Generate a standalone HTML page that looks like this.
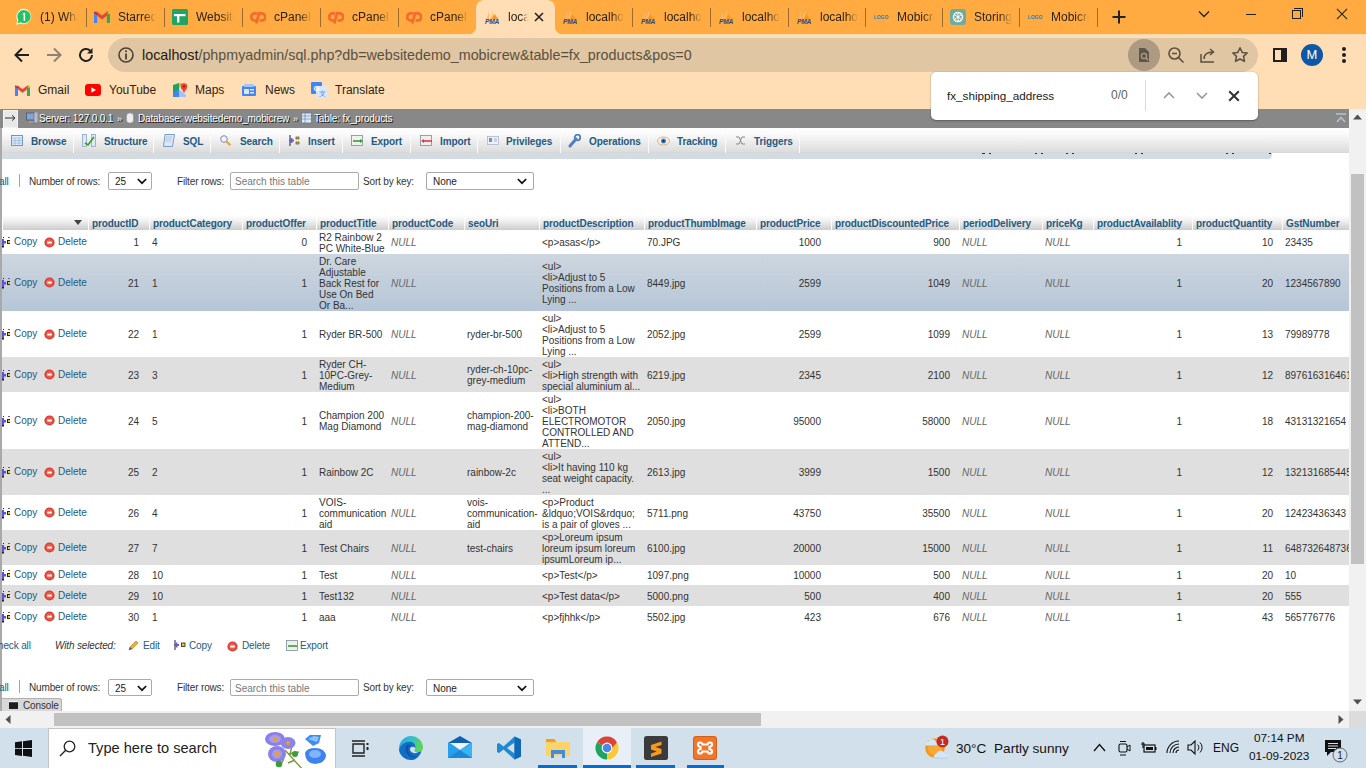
<!DOCTYPE html>
<html><head><meta charset="utf-8">
<style>
*{box-sizing:border-box;margin:0;padding:0}
html,body{width:1366px;height:768px;overflow:hidden;background:#fff;font-family:"Liberation Sans",sans-serif;position:relative}
.a{position:absolute}
#tabstrip{position:absolute;left:0;top:0;width:1366px;height:34px;background:#ffab42}
.tab{position:absolute;top:0;height:33px;width:78px}
.tab .ic{position:absolute;left:8px;top:9px;width:16px;height:16px}
.tab .tt{position:absolute;left:32px;top:10px;font-size:12px;color:#2a2218;white-space:nowrap;overflow:hidden;width:38px;line-height:15px;-webkit-mask-image:linear-gradient(to right,#000 68%,transparent 100%)}
.sep{position:absolute;top:8px;width:1px;height:19px;background:#9b6a2c}
#toolbar{position:absolute;left:0;top:34px;width:1366px;height:75px;background:#ffdeb5}
#omni{position:absolute;left:108px;top:38px;width:1150px;height:34px;border-radius:17px;background:#e0c6a2}
.bm{position:absolute;top:83px;font-size:12px;color:#2d2416;line-height:15px;white-space:nowrap}
.pbc{position:absolute;top:113px;letter-spacing:-0.15px;font-size:10px;line-height:12px;color:#fff;white-space:nowrap;text-shadow:1px 1px 0 #111}
.ptb{position:absolute;top:128px;width:1px;height:25px;background:#d2d2d2;border-right:1px solid #fafafa}
.ptt{position:absolute;top:136px;letter-spacing:-0.1px;font-size:10px;line-height:12px;font-weight:bold;color:#235a81;white-space:nowrap}
.ftx{position:absolute;font-size:10px;line-height:12px;color:#333;white-space:nowrap;letter-spacing:-0.15px}
.sel{position:absolute;background:#fff;border:1px solid #aaa;border-radius:2px}
.sel span{position:absolute;top:3px;font-size:10px;line-height:11px;color:#222;white-space:nowrap}
.chev{position:absolute}
#tbl{border-collapse:collapse;table-layout:fixed;width:1378px;position:absolute;left:2px;top:0}
#tbl th{height:15px;padding:0 0 0 3px;text-align:left;font-size:10px;font-weight:bold;color:#235a81;white-space:nowrap;overflow:hidden;background:linear-gradient(#ffffff 0%,#f0f0f0 40%,#cccccc 100%);box-shadow:inset 1px 0 0 #fff;position:relative;line-height:15px;padding-top:0;padding-left:4px}
#tbl th span{position:relative;top:1px;letter-spacing:-0.1px}
#tbl td{padding:1px 3px 0 3px;font-size:10px;line-height:11px;color:#333;white-space:nowrap;overflow:hidden;vertical-align:middle}
#tbl td.r{text-align:right;padding-right:9px}
#tbl td.n{font-style:italic;color:#666}
#tbl tr.g td{background:#dfdfdf}
#tbl tr.h td{background:linear-gradient(#ced6df,#b6c6d7)}
#tbl td.act{padding:0;position:relative}
.ac{position:relative;height:12px}
.cpi{position:absolute;left:0;top:0}
.cp{position:absolute;left:12px;top:0;color:#235a81;line-height:12px}
.dli{position:absolute;left:42px;top:0}
.dl{position:absolute;left:56px;top:0;color:#235a81;line-height:12px}
.tb{position:absolute;top:740px;font-size:13.6px;line-height:17px;color:#111;white-space:nowrap}
</style></head><body>
<div id="tabstrip" class="a"></div>
<!-- active tab -->
<div class="a" style="left:476px;top:0;width:79px;height:34px;background:#ffdeb5;border-radius:8px 8px 0 0"></div>
<div class="a" style="left:468px;top:26px;width:8px;height:8px;background:radial-gradient(circle at 0 0,#ffab42 8px,#ffdeb5 8.5px)"></div>
<div class="a" style="left:555px;top:26px;width:8px;height:8px;background:radial-gradient(circle at 100% 0,#ffab42 8px,#ffdeb5 8.5px)"></div>
<!-- tabs -->
<div class="tab" style="left:8px"><svg class="ic" viewBox="0 0 16 16" style="left:7px;top:8px;width:17px;height:17px"><path d="M8.5 0.8a7.2 7.2 0 0 0-6.2 10.9L1 15.8l4.2-1.2A7.2 7.2 0 1 0 8.5 0.8z" fill="#fff"/><path d="M8.5 1.8a6.2 6.2 0 0 0-5.3 9.5L2.4 14.3l3.1-.9A6.2 6.2 0 1 0 8.5 1.8z" fill="#25c366"/><path d="M7.3 5.2l2.2-1v7.8H8.1V5.9l-.8.4z" fill="#fff"/></svg><div class="tt">(1) WhatsApp</div></div>
<div class="sep" style="left:86px"></div>
<div class="tab" style="left:86px"><svg class="ic" viewBox="0 0 16 16"><path d="M1.5 3.5L8 8.5l6.5-5" stroke="#ea4335" stroke-width="3" fill="none" stroke-linejoin="miter"/><path d="M0 3v11h3.2V4.5z" fill="#4285f4"/><path d="M12.8 4.5V14H16V3z" fill="#34a853"/><path d="M12.8 4.5L16 2.3V5z" fill="#fbbc04"/><path d="M0 2.3L3.2 4.5V6L0 4z" fill="#c5221f"/></svg><div class="tt">Starred</div></div>
<div class="sep" style="left:164px"></div>
<div class="tab" style="left:164px"><svg class="ic" viewBox="0 0 16 16"><rect x="0" y="0" width="16" height="16" rx="1.5" fill="#1fa463"/><rect x="2" y="5" width="11.5" height="2.2" fill="#fff"/><rect x="5" y="5" width="2.4" height="8.5" fill="#fff"/></svg><div class="tt">Website</div></div>
<div class="sep" style="left:242px"></div>
<div class="tab" style="left:242px"><svg class="ic" viewBox="0 0 16 16"><path d="M7 4.3H4.8A3.6 3.6 0 0 0 4.8 11.5H6.5" stroke="#f46b2c" stroke-width="2.7" fill="none"/><path d="M6.3 14.5L9 4.3h2.6A3.6 3.6 0 0 1 11.6 11.5H9.6" stroke="#f46b2c" stroke-width="2.7" fill="none"/></svg><div class="tt">cPanel</div></div>
<div class="sep" style="left:320px"></div>
<div class="tab" style="left:320px"><svg class="ic" viewBox="0 0 16 16"><path d="M7 4.3H4.8A3.6 3.6 0 0 0 4.8 11.5H6.5" stroke="#f46b2c" stroke-width="2.7" fill="none"/><path d="M6.3 14.5L9 4.3h2.6A3.6 3.6 0 0 1 11.6 11.5H9.6" stroke="#f46b2c" stroke-width="2.7" fill="none"/></svg><div class="tt">cPanel</div></div>
<div class="sep" style="left:398px"></div>
<div class="tab" style="left:398px"><svg class="ic" viewBox="0 0 16 16"><path d="M7 4.3H4.8A3.6 3.6 0 0 0 4.8 11.5H6.5" stroke="#f46b2c" stroke-width="2.7" fill="none"/><path d="M6.3 14.5L9 4.3h2.6A3.6 3.6 0 0 1 11.6 11.5H9.6" stroke="#f46b2c" stroke-width="2.7" fill="none"/></svg><div class="tt">cPanel</div></div>
<div class="tab" style="left:476px"><svg class="ic" viewBox="0 0 16 16"><path d="M2.5 10.5 L5 2.5 L5 10.5z" fill="#fbb868"/><path d="M6 10.5 L9 1.5 L8.5 10.5z" fill="#fcc27a"/><path d="M7 10.5 L10.5 5 L14.5 10.5z" fill="#f59a20"/><text x="8" y="14.8" font-size="6.6" font-weight="bold" font-style="italic" fill="#34418f" text-anchor="middle" font-family="Liberation Sans" letter-spacing="-0.2">PMA</text></svg><div class="tt" style="width:20px">localhost</div>
<svg class="a" style="left:57px;top:11px" width="12" height="12" viewBox="0 0 12 12"><path d="M2 2L10 10M10 2L2 10" stroke="#222" stroke-width="1.6"/></svg></div>
<div class="tab" style="left:554px"><svg class="ic" viewBox="0 0 16 16"><path d="M2.5 10.5 L5 2.5 L5 10.5z" fill="#fbb868"/><path d="M6 10.5 L9 1.5 L8.5 10.5z" fill="#fcc27a"/><path d="M7 10.5 L10.5 5 L14.5 10.5z" fill="#f59a20"/><text x="8" y="14.8" font-size="6.6" font-weight="bold" font-style="italic" fill="#34418f" text-anchor="middle" font-family="Liberation Sans" letter-spacing="-0.2">PMA</text></svg><div class="tt">localhost</div></div>
<div class="sep" style="left:632px"></div>
<div class="tab" style="left:632px"><svg class="ic" viewBox="0 0 16 16"><path d="M2.5 10.5 L5 2.5 L5 10.5z" fill="#fbb868"/><path d="M6 10.5 L9 1.5 L8.5 10.5z" fill="#fcc27a"/><path d="M7 10.5 L10.5 5 L14.5 10.5z" fill="#f59a20"/><text x="8" y="14.8" font-size="6.6" font-weight="bold" font-style="italic" fill="#34418f" text-anchor="middle" font-family="Liberation Sans" letter-spacing="-0.2">PMA</text></svg><div class="tt">localhost</div></div>
<div class="sep" style="left:710px"></div>
<div class="tab" style="left:710px"><svg class="ic" viewBox="0 0 16 16"><path d="M2.5 10.5 L5 2.5 L5 10.5z" fill="#fbb868"/><path d="M6 10.5 L9 1.5 L8.5 10.5z" fill="#fcc27a"/><path d="M7 10.5 L10.5 5 L14.5 10.5z" fill="#f59a20"/><text x="8" y="14.8" font-size="6.6" font-weight="bold" font-style="italic" fill="#34418f" text-anchor="middle" font-family="Liberation Sans" letter-spacing="-0.2">PMA</text></svg><div class="tt">localhost</div></div>
<div class="sep" style="left:788px"></div>
<div class="tab" style="left:788px"><svg class="ic" viewBox="0 0 16 16"><path d="M2.5 10.5 L5 2.5 L5 10.5z" fill="#fbb868"/><path d="M6 10.5 L9 1.5 L8.5 10.5z" fill="#fcc27a"/><path d="M7 10.5 L10.5 5 L14.5 10.5z" fill="#f59a20"/><text x="8" y="14.8" font-size="6.6" font-weight="bold" font-style="italic" fill="#34418f" text-anchor="middle" font-family="Liberation Sans" letter-spacing="-0.2">PMA</text></svg><div class="tt">localhost</div></div>
<div class="sep" style="left:865px"></div>
<div class="tab" style="left:865px"><svg class="ic" viewBox="0 0 16 16"><text x="8" y="10" font-size="5" font-weight="bold" fill="#2a7fc1" text-anchor="middle" font-family="Liberation Sans">LOGO</text></svg><div class="tt">Mobicrew</div></div>
<div class="sep" style="left:942px"></div>
<div class="tab" style="left:942px"><svg class="ic" viewBox="0 0 16 16"><rect width="16" height="16" rx="3" fill="#74aa9c"/><circle cx="8" cy="8" r="4.5" fill="none" stroke="#fff" stroke-width="1.4"/><path d="M5 6l6 4M5 10l6-4M8 3.5v9" stroke="#fff" stroke-width="1"/></svg><div class="tt">Storing</div></div>
<div class="sep" style="left:1019px"></div>
<div class="tab" style="left:1019px"><svg class="ic" viewBox="0 0 16 16"><text x="8" y="10" font-size="5" font-weight="bold" fill="#2a7fc1" text-anchor="middle" font-family="Liberation Sans">LOGO</text></svg><div class="tt">Mobicrew</div></div>
<div class="sep" style="left:1097px"></div>
<svg class="a" style="left:1111px;top:9px" width="16" height="16" viewBox="0 0 16 16"><path d="M8 1.5v13M1.5 8h13" stroke="#222" stroke-width="2"/></svg>
<svg class="a" style="left:1198px;top:9px" width="12" height="10" viewBox="0 0 12 10"><path d="M1 2.5l5 5 5-5" stroke="#222" stroke-width="1.3" fill="none"/></svg>
<div class="a" style="left:1246px;top:14px;width:10px;height:1px;background:#222"></div>
<div class="a" style="left:1292px;top:10px;width:9px;height:9px;border:1px solid #222"></div>
<div class="a" style="left:1294px;top:8px;width:9px;height:9px;border-top:1px solid #222;border-right:1px solid #222"></div>
<svg class="a" style="left:1336px;top:8px" width="12" height="12" viewBox="0 0 13 13"><path d="M1 1L12 12M12 1L1 12" stroke="#222" stroke-width="1.2"/></svg>

<div id="toolbar" class="a"></div>
<svg class="a" style="left:13px;top:46px" width="18" height="18" viewBox="0 0 18 18"><path d="M16 9H3M9 2.5L2.5 9 9 15.5" stroke="#1f1f1f" stroke-width="2" fill="none"/></svg>
<svg class="a" style="left:45px;top:46px" width="18" height="18" viewBox="0 0 18 18"><path d="M2 9h13M9 2.5L15.5 9 9 15.5" stroke="#8e8270" stroke-width="2" fill="none"/></svg>
<svg class="a" style="left:77px;top:46px" width="18" height="18" viewBox="0 0 18 18"><path d="M15 9a6 6 0 1 1-1.8-4.3" stroke="#1f1f1f" stroke-width="2" fill="none"/><path d="M15.5 2v5.5H10z" fill="#1f1f1f"/></svg>
<div id="omni" class="a"></div>
<svg class="a" style="left:117px;top:46px" width="18" height="18" viewBox="0 0 18 18"><circle cx="9" cy="9" r="7" stroke="#4b4336" stroke-width="1.6" fill="none"/><rect x="8.1" y="7.5" width="1.8" height="6" fill="#4b4336"/><rect x="8.1" y="4.3" width="1.8" height="1.8" fill="#4b4336"/></svg>
<div class="a" style="left:142px;top:46px;font-size:14.3px;line-height:18px;color:#5a5040;white-space:nowrap"><span style="color:#1f1a12">localhost</span>/phpmyadmin/sql.php?db=websitedemo_mobicrew&amp;table=fx_products&amp;pos=0</div>
<div class="a" style="left:1128px;top:39px;width:32px;height:32px;border-radius:16px;background:#ad9a80"></div>
<svg class="a" style="left:1136px;top:47px" width="16" height="16" viewBox="0 0 16 16"><path d="M3 1h6l4 4v10H3z" fill="#5f574b"/><circle cx="8" cy="9" r="2.6" stroke="#ad9a80" stroke-width="1.3" fill="none"/><path d="M9.8 10.8l2.4 2.4" stroke="#ad9a80" stroke-width="1.4"/></svg>
<svg class="a" style="left:1167px;top:46px" width="18" height="18" viewBox="0 0 18 18"><circle cx="7.5" cy="7.5" r="5.5" stroke="#5a5040" stroke-width="1.6" fill="none"/><path d="M5 7.5h5M11.5 11.5l5 5" stroke="#5a5040" stroke-width="1.6"/></svg>
<svg class="a" style="left:1199px;top:46px" width="18" height="18" viewBox="0 0 18 18"><path d="M2 8v8h13" stroke="#5a5040" stroke-width="1.5" fill="none"/><path d="M5 13c0-5 4-7 9-7M11 3l3.5 3L11 9" stroke="#5a5040" stroke-width="1.5" fill="none"/></svg>
<svg class="a" style="left:1231px;top:46px" width="18" height="18" viewBox="0 0 18 18"><path d="M9 1.8l2.2 4.6 5 .6-3.7 3.4 1 5L9 13l-4.5 2.4 1-5L1.8 7l5-.6z" stroke="#5a5040" stroke-width="1.5" fill="none" stroke-linejoin="round"/></svg>
<div class="a" style="left:1273px;top:48px;width:14px;height:14px;border:2px solid #1f1f1f;border-right-width:6px"></div>
<div class="a" style="left:1301px;top:44px;width:22px;height:22px;border-radius:11px;background:#0b57a8;color:#fff;font-size:13px;line-height:22px;text-align:center">M</div>
<div class="a" style="left:1342px;top:47px;width:4px;height:4px;border-radius:2px;background:#1f1f1f"></div>
<div class="a" style="left:1342px;top:53px;width:4px;height:4px;border-radius:2px;background:#1f1f1f"></div>
<div class="a" style="left:1342px;top:59px;width:4px;height:4px;border-radius:2px;background:#1f1f1f"></div>
<!-- bookmarks -->
<svg class="a" style="left:15px;top:83px" width="15" height="14" viewBox="0 0 16 15"><path d="M1.5 3.5L8 8.5l6.5-5" stroke="#ea4335" stroke-width="3" fill="none"/><path d="M0 3v11h3.2V4.5z" fill="#4285f4"/><path d="M12.8 4.5V14H16V3z" fill="#34a853"/><path d="M12.8 4.5L16 2.3V5z" fill="#fbbc04"/><path d="M0 2.3L3.2 4.5V6L0 4z" fill="#c5221f"/></svg>
<div class="bm" style="left:38px">Gmail</div>
<svg class="a" style="left:85px;top:84px" width="16" height="12" viewBox="0 0 16 12"><rect width="16" height="12" rx="3" fill="#f00"/><path d="M6.3 3.3v5.4L11 6z" fill="#fff"/></svg>
<div class="bm" style="left:109px">YouTube</div>
<svg class="a" style="left:172px;top:82px" width="16" height="16" viewBox="0 0 16 16"><path d="M1 3l6-2 0 14-6 0z" fill="#1ea362"/><path d="M1 11l6-4 0 8H1z" fill="#4285f4"/><path d="M7 7l7 6v2H7z" fill="#a0c3ff"/><path d="M7 1l4 0-4 6z" fill="#fbbc04"/><circle cx="12" cy="4.5" r="3.2" fill="#e94235"/><path d="M9.5 6l2.5 5 2.5-5z" fill="#e94235"/><circle cx="12" cy="4.5" r="1.1" fill="#8b1d16"/></svg>
<div class="bm" style="left:195px">Maps</div>
<svg class="a" style="left:241px;top:83px" width="16" height="14" viewBox="0 0 16 14"><rect x="1" y="3" width="14" height="10" rx="1" fill="#4285f4"/><rect x="3" y="1" width="10" height="3" rx="1" fill="#a3c5fa"/><rect x="3" y="6" width="5" height="5" fill="#fff" opacity=".8"/><rect x="9" y="6" width="4" height="1.5" fill="#fff" opacity=".8"/><rect x="9" y="9" width="4" height="1.5" fill="#fff" opacity=".8"/></svg>
<div class="bm" style="left:265px">News</div>
<svg class="a" style="left:311px;top:82px" width="16" height="16" viewBox="0 0 16 16"><rect x="0" y="0" width="11" height="12" rx="1" fill="#4285f4"/><rect x="5" y="4" width="11" height="12" rx="1" fill="#dbe6f8"/><text x="5.5" y="9" font-size="8" font-weight="bold" fill="#fff" text-anchor="middle" font-family="Liberation Sans">G</text><text x="11" y="14" font-size="7" fill="#4285f4" text-anchor="middle" font-family="Liberation Sans">文</text></svg>
<div class="bm" style="left:335px">Translate</div>
<!-- PMA frame -->
<div class="a" style="left:0;top:109px;width:1350px;height:602px;background:#fff"></div>
<div class="a" style="left:0;top:109px;width:2px;height:602px;background:#a9a9a9"></div>
<div class="a" style="left:0;top:109px;width:1350px;height:19px;background:#888"></div>
<div class="a" style="left:3px;top:110px;width:15px;height:18px;background:#e8e8e8;border:1px solid #f4f4f4"></div>
<svg class="a" style="left:5px;top:114px" width="11" height="8" viewBox="0 0 11 8"><path d="M0 4h9.5M7 1.3l3 2.7-3 2.7" stroke="#333" stroke-width="1" fill="none"/></svg>
<svg class="a" style="left:26px;top:112px" width="12" height="12" viewBox="0 0 12 12"><rect x="0.5" y="1" width="9" height="7" fill="#7fa6d9" stroke="#556" stroke-width="0.8"/><rect x="3" y="9" width="5" height="2" fill="#99a"/><rect x="8" y="0" width="4" height="11" fill="#bbc" stroke="#667" stroke-width="0.6"/></svg>
<div class="pbc" style="left:39px">Server: 127.0.0.1</div>
<div class="pbc" style="left:117px;font-size:9px">»</div>
<svg class="a" style="left:126px;top:112px" width="8" height="12" viewBox="0 0 8 12"><rect x="0.5" y="1" width="7" height="10" rx="3" fill="#eee" stroke="#999" stroke-width="0.8"/></svg>
<div class="pbc" style="left:138px">Database: websitedemo_mobicrew</div>
<div class="pbc" style="left:293px;font-size:9px">»</div>
<svg class="a" style="left:301px;top:112px" width="11" height="12" viewBox="0 0 11 12"><rect x="0.5" y="1" width="10" height="10" fill="#dfe8f0" stroke="#5a7ea8" stroke-width="0.8"/><path d="M0.5 4h10M0.5 7h10M4 1v10" stroke="#5a7ea8" stroke-width="0.6"/></svg>
<div class="pbc" style="left:314px">Table: fx_products</div>
<svg class="a" style="left:1336px;top:113px" width="10" height="10" viewBox="0 0 10 10"><path d="M0 1h10" stroke="#b7c2ce" stroke-width="1.5"/><path d="M1 9l4-4.5L9 9" stroke="#b7c2ce" stroke-width="1.5" fill="none"/></svg>
<!-- tabs -->
<div class="a" style="left:2px;top:128px;width:1347px;height:25px;background:linear-gradient(#ffffff 0%,#fafafa 25%,#e4e4e4 80%,#dcdcdc 100%);border-bottom:1px solid #d8d8d8"></div>
<div class="a" style="left:2px;top:153px;width:1270px;height:6px;background:#d3dce3;border-radius:0 0 4px 0"></div>
<div class="a" style="left:982px;top:153px;width:3px;height:1px;background:#333"></div><div class="a" style="left:989px;top:153px;width:2px;height:1px;background:#333"></div><div class="a" style="left:1035px;top:153px;width:2px;height:1px;background:#333"></div><div class="a" style="left:1041px;top:153px;width:2px;height:1px;background:#333"></div><div class="a" style="left:1066px;top:153px;width:2px;height:1px;background:#333"></div><div class="a" style="left:1072px;top:153px;width:2px;height:1px;background:#333"></div><div class="a" style="left:1135px;top:153px;width:2px;height:1px;background:#333"></div><div class="a" style="left:1141px;top:153px;width:2px;height:1px;background:#333"></div><div class="a" style="left:1226px;top:153px;width:2px;height:1px;background:#333"></div><div class="a" style="left:1232px;top:153px;width:2px;height:1px;background:#333"></div><div class="a" style="left:1269px;top:153px;width:2px;height:1px;background:#333"></div>
<div id="ptabs">
<div class="ptb" style="left:73px"></div><div class="ptb" style="left:153px"></div><div class="ptb" style="left:210px"></div><div class="ptb" style="left:279px"></div><div class="ptb" style="left:342px"></div><div class="ptb" style="left:410px"></div><div class="ptb" style="left:477px"></div><div class="ptb" style="left:560px"></div><div class="ptb" style="left:648px"></div><div class="ptb" style="left:725px"></div><div class="ptb" style="left:799px"></div>
<div class="ptt" style="left:31px">Browse</div>
<div class="ptt" style="left:104px">Structure</div>
<div class="ptt" style="left:183px">SQL</div>
<div class="ptt" style="left:240px">Search</div>
<div class="ptt" style="left:308px">Insert</div>
<div class="ptt" style="left:371px">Export</div>
<div class="ptt" style="left:440px">Import</div>
<div class="ptt" style="left:506px">Privileges</div>
<div class="ptt" style="left:589px">Operations</div>
<div class="ptt" style="left:677px">Tracking</div>
<div class="ptt" style="left:754px">Triggers</div>
<!-- tab icons -->
<svg class="a" style="left:11px;top:135px" width="12" height="11" viewBox="0 0 12 11"><rect x="0.5" y="0.5" width="11" height="10" fill="#e4eefa" stroke="#6b96c8"/><path d="M0.5 3h11M0.5 5.5h11M0.5 8h11M4 3v8M8 3v8" stroke="#8fb0d8" stroke-width="0.7"/></svg>
<svg class="a" style="left:82px;top:134px" width="14" height="13" viewBox="0 0 14 13"><rect x="0.5" y="0.5" width="4" height="12" fill="#dfe8f3" stroke="#8aa8c8" stroke-width="0.8"/><rect x="9.5" y="0.5" width="4" height="12" fill="#dfe8f3" stroke="#8aa8c8" stroke-width="0.8"/><path d="M3 9l3 2 6-8" stroke="#3a9a2a" stroke-width="1.6" fill="none"/></svg>
<svg class="a" style="left:163px;top:134px" width="12" height="13" viewBox="0 0 12 13"><path d="M2 0.5h9.5l-2 12H0.5z" fill="#dbe7f6" stroke="#6f93c2" stroke-width="0.9"/><path d="M3 3h6M2.7 5h6M2.4 7h6" stroke="#9bb5da" stroke-width="0.6"/></svg>
<svg class="a" style="left:220px;top:135px" width="11" height="11" viewBox="0 0 11 11"><circle cx="4" cy="4" r="3.3" fill="#f0f4fa" stroke="#7a8da8" stroke-width="1"/><path d="M6.3 6.3l4 4" stroke="#e8a040" stroke-width="2"/></svg>
<svg class="a" style="left:289px;top:134px" width="12" height="13" viewBox="0 0 12 13"><path d="M1 1v11" stroke="#222" stroke-width="1"/><path d="M0 6.5h5M2.5 4v5" stroke="#6a5acd" stroke-width="1.8"/><rect x="7" y="3" width="3" height="2" fill="#f4c20d" stroke="#333" stroke-width="0.6"/><rect x="7" y="8" width="3" height="2" fill="#f4c20d" stroke="#333" stroke-width="0.6"/></svg>
<svg class="a" style="left:351px;top:135px" width="13" height="11" viewBox="0 0 13 11"><rect x="0.5" y="0.5" width="11" height="10" fill="#eef2e8" stroke="#7b8fa0" stroke-width="0.8"/><path d="M2 6h9" stroke="#3b9a3b" stroke-width="1.6"/><path d="M9 4l3 2-3 2" fill="#3b9a3b"/></svg>
<svg class="a" style="left:420px;top:135px" width="13" height="11" viewBox="0 0 13 11"><rect x="0.5" y="0.5" width="11" height="10" fill="#f4ecec" stroke="#7b8fa0" stroke-width="0.8"/><path d="M3 6h9" stroke="#d04040" stroke-width="1.6"/><path d="M4 4l-3 2 3 2" fill="#d04040"/></svg>
<svg class="a" style="left:487px;top:136px" width="12" height="9" viewBox="0 0 12 9"><rect x="0.5" y="0.5" width="11" height="8" fill="#eef2f8" stroke="#a0b0c8" stroke-width="0.7"/><rect x="2" y="2" width="3" height="4" fill="#6b96c8"/><path d="M7 3h3M7 5h3" stroke="#8899aa" stroke-width="0.7"/></svg>
<svg class="a" style="left:568px;top:134px" width="13" height="14" viewBox="0 0 13 14"><path d="M2 12L8 5" stroke="#4f7fbf" stroke-width="3" stroke-linecap="round"/><circle cx="9.5" cy="3.5" r="2.8" fill="none" stroke="#4f7fbf" stroke-width="1.8"/></svg>
<svg class="a" style="left:657px;top:136px" width="13" height="10" viewBox="0 0 13 10"><ellipse cx="6.5" cy="5" rx="6" ry="4" fill="#f8f0e8" stroke="#d0a070" stroke-width="0.8"/><circle cx="6.5" cy="5" r="2.5" fill="#3b7fc4"/><circle cx="6.5" cy="5" r="1" fill="#123"/></svg>
<svg class="a" style="left:735px;top:135px" width="11" height="11" viewBox="0 0 11 11"><path d="M1 2h3l3 7h3M1 9h3l3-7h3" stroke="#888" stroke-width="1" fill="none"/></svg>
</div>
<!-- filter bar top -->
<div class="ftx" style="left:-1px;top:176px;color:#235a81">all</div>
<div class="a" style="left:19px;top:174px;width:1px;height:13px;background:#a8a49c"></div>
<div class="ftx" style="left:29px;top:176px">Number of rows:</div>
<div class="sel" style="left:108px;top:172px;width:44px;height:18px"><span style="left:6px">25</span><svg class="chev" style="left:28px;top:5px" width="10" height="7" viewBox="0 0 10 7"><path d="M0.8 1l4.2 4.2 4.2-4.2" stroke="#111" stroke-width="1.7" fill="none"/></svg></div>
<div class="ftx" style="left:177px;top:176px">Filter rows:</div>
<div class="sel" style="left:230px;top:172px;width:129px;height:18px"><span style="left:4px;color:#777">Search this table</span></div>
<div class="ftx" style="left:363px;top:176px">Sort by key:</div>
<div class="sel" style="left:426px;top:172px;width:108px;height:18px"><span style="left:6px">None</span><svg class="chev" style="left:90px;top:5px" width="10" height="7" viewBox="0 0 10 7"><path d="M0.8 1l4.2 4.2 4.2-4.2" stroke="#111" stroke-width="1.7" fill="none"/></svg></div>
<div class="a" style="left:0;top:215px;width:1349px;height:412px;overflow:hidden">
<table id="tbl"><colgroup><col style="width:86px"><col style="width:61px"><col style="width:93px"><col style="width:74px"><col style="width:72px"><col style="width:76px"><col style="width:75px"><col style="width:105px"><col style="width:112px"><col style="width:75px"><col style="width:128px"><col style="width:83px"><col style="width:51px"><col style="width:99px"><col style="width:90px"><col style="width:98px"></colgroup>
<tr class="hd">
<th><svg class="a" style="left:72px;top:5px" width="8" height="5" viewBox="0 0 8 5"><path d="M0 0h8L4 5z" fill="#444"/></svg></th>
<th><span>productID</span></th>
<th><span>productCategory</span></th>
<th><span>productOffer</span></th>
<th><span>productTitle</span></th>
<th><span>productCode</span></th>
<th><span>seoUri</span></th>
<th><span>productDescription</span></th>
<th><span>productThumbImage</span></th>
<th><span>productPrice</span></th>
<th><span>productDiscountedPrice</span></th>
<th><span>periodDelivery</span></th>
<th><span>priceKg</span></th>
<th><span>productAvailablity</span></th>
<th><span>productQuantity</span></th>
<th><span>GstNumber</span></th>
</tr>
<tr class="w" style="height:24px">
<td class="act"><div class="ac"><svg class="cpi" width="9" height="12" viewBox="0 0 9 12"><rect x="1" y="1" width="1" height="1" fill="#222"/><rect x="0" y="3" width="2" height="8" fill="#5b52d6"/><rect x="0" y="5" width="4" height="2.5" fill="#5b52d6"/><rect x="0" y="10" width="2" height="1.5" fill="#222"/><rect x="6" y="1" width="2" height="1" fill="#5b52d6"/><rect x="5" y="4" width="3" height="4" fill="#222"/><rect x="6" y="5" width="2" height="2" fill="#f5c400"/></svg><span class="cp">Copy</span><svg class="dli" width="11" height="11" viewBox="0 0 11 11" style="top:0.5px"><circle cx="5.5" cy="5.5" r="5.1" fill="#dd3f33"/><circle cx="5.5" cy="5.5" r="3.4" fill="#ec5a4c"/><rect x="3.2" y="4.6" width="4.6" height="1.9" fill="#fff"/></svg><span class="dl">Delete</span></div></td>
<td class="r" style="padding-right:10px">1</td>
<td>4</td>
<td class="r" style="padding-right:9px">0</td>
<td>R2 Rainbow 2<br>PC White-Blue</td>
<td class="n">NULL</td>
<td></td>
<td>&lt;p&gt;asas&lt;/p&gt;</td>
<td>70.JPG</td>
<td class="r" style="padding-right:10px">1000</td>
<td class="r" style="padding-right:9px">900</td>
<td class="n">NULL</td>
<td class="n">NULL</td>
<td class="r" style="padding-right:10px">1</td>
<td class="r" style="padding-right:9px">10</td>
<td>23435</td>
</tr>
<tr class="h" style="height:57px">
<td class="act"><div class="ac"><svg class="cpi" width="9" height="12" viewBox="0 0 9 12"><rect x="1" y="1" width="1" height="1" fill="#222"/><rect x="0" y="3" width="2" height="8" fill="#5b52d6"/><rect x="0" y="5" width="4" height="2.5" fill="#5b52d6"/><rect x="0" y="10" width="2" height="1.5" fill="#222"/><rect x="6" y="1" width="2" height="1" fill="#5b52d6"/><rect x="5" y="4" width="3" height="4" fill="#222"/><rect x="6" y="5" width="2" height="2" fill="#f5c400"/></svg><span class="cp">Copy</span><svg class="dli" width="11" height="11" viewBox="0 0 11 11" style="top:0.5px"><circle cx="5.5" cy="5.5" r="5.1" fill="#dd3f33"/><circle cx="5.5" cy="5.5" r="3.4" fill="#ec5a4c"/><rect x="3.2" y="4.6" width="4.6" height="1.9" fill="#fff"/></svg><span class="dl">Delete</span></div></td>
<td class="r" style="padding-right:10px">21</td>
<td>1</td>
<td class="r" style="padding-right:9px">1</td>
<td>Dr. Care<br>Adjustable<br>Back Rest for<br>Use On Bed<br>Or Ba...</td>
<td class="n">NULL</td>
<td></td>
<td>&lt;ul&gt;<br>&lt;li&gt;Adjust to 5<br>Positions from a Low<br>Lying ...</td>
<td>8449.jpg</td>
<td class="r" style="padding-right:10px">2599</td>
<td class="r" style="padding-right:9px">1049</td>
<td class="n">NULL</td>
<td class="n">NULL</td>
<td class="r" style="padding-right:10px">1</td>
<td class="r" style="padding-right:9px">20</td>
<td>1234567890</td>
</tr>
<tr class="w" style="height:46px">
<td class="act"><div class="ac"><svg class="cpi" width="9" height="12" viewBox="0 0 9 12"><rect x="1" y="1" width="1" height="1" fill="#222"/><rect x="0" y="3" width="2" height="8" fill="#5b52d6"/><rect x="0" y="5" width="4" height="2.5" fill="#5b52d6"/><rect x="0" y="10" width="2" height="1.5" fill="#222"/><rect x="6" y="1" width="2" height="1" fill="#5b52d6"/><rect x="5" y="4" width="3" height="4" fill="#222"/><rect x="6" y="5" width="2" height="2" fill="#f5c400"/></svg><span class="cp">Copy</span><svg class="dli" width="11" height="11" viewBox="0 0 11 11" style="top:0.5px"><circle cx="5.5" cy="5.5" r="5.1" fill="#dd3f33"/><circle cx="5.5" cy="5.5" r="3.4" fill="#ec5a4c"/><rect x="3.2" y="4.6" width="4.6" height="1.9" fill="#fff"/></svg><span class="dl">Delete</span></div></td>
<td class="r" style="padding-right:10px">22</td>
<td>1</td>
<td class="r" style="padding-right:9px">1</td>
<td>Ryder BR-500</td>
<td class="n">NULL</td>
<td>ryder-br-500</td>
<td>&lt;ul&gt;<br>&lt;li&gt;Adjust to 5<br>Positions from a Low<br>Lying ...</td>
<td>2052.jpg</td>
<td class="r" style="padding-right:10px">2599</td>
<td class="r" style="padding-right:9px">1099</td>
<td class="n">NULL</td>
<td class="n">NULL</td>
<td class="r" style="padding-right:10px">1</td>
<td class="r" style="padding-right:9px">13</td>
<td>79989778</td>
</tr>
<tr class="g" style="height:35px">
<td class="act"><div class="ac"><svg class="cpi" width="9" height="12" viewBox="0 0 9 12"><rect x="1" y="1" width="1" height="1" fill="#222"/><rect x="0" y="3" width="2" height="8" fill="#5b52d6"/><rect x="0" y="5" width="4" height="2.5" fill="#5b52d6"/><rect x="0" y="10" width="2" height="1.5" fill="#222"/><rect x="6" y="1" width="2" height="1" fill="#5b52d6"/><rect x="5" y="4" width="3" height="4" fill="#222"/><rect x="6" y="5" width="2" height="2" fill="#f5c400"/></svg><span class="cp">Copy</span><svg class="dli" width="11" height="11" viewBox="0 0 11 11" style="top:0.5px"><circle cx="5.5" cy="5.5" r="5.1" fill="#dd3f33"/><circle cx="5.5" cy="5.5" r="3.4" fill="#ec5a4c"/><rect x="3.2" y="4.6" width="4.6" height="1.9" fill="#fff"/></svg><span class="dl">Delete</span></div></td>
<td class="r" style="padding-right:10px">23</td>
<td>3</td>
<td class="r" style="padding-right:9px">1</td>
<td>Ryder CH-<br>10PC-Grey-<br>Medium</td>
<td class="n">NULL</td>
<td>ryder-ch-10pc-<br>grey-medium</td>
<td>&lt;ul&gt;<br>&lt;li&gt;High strength with<br>special aluminium al...</td>
<td>6219.jpg</td>
<td class="r" style="padding-right:10px">2345</td>
<td class="r" style="padding-right:9px">2100</td>
<td class="n">NULL</td>
<td class="n">NULL</td>
<td class="r" style="padding-right:10px">1</td>
<td class="r" style="padding-right:9px">12</td>
<td>89761631646123</td>
</tr>
<tr class="w" style="height:57px">
<td class="act"><div class="ac"><svg class="cpi" width="9" height="12" viewBox="0 0 9 12"><rect x="1" y="1" width="1" height="1" fill="#222"/><rect x="0" y="3" width="2" height="8" fill="#5b52d6"/><rect x="0" y="5" width="4" height="2.5" fill="#5b52d6"/><rect x="0" y="10" width="2" height="1.5" fill="#222"/><rect x="6" y="1" width="2" height="1" fill="#5b52d6"/><rect x="5" y="4" width="3" height="4" fill="#222"/><rect x="6" y="5" width="2" height="2" fill="#f5c400"/></svg><span class="cp">Copy</span><svg class="dli" width="11" height="11" viewBox="0 0 11 11" style="top:0.5px"><circle cx="5.5" cy="5.5" r="5.1" fill="#dd3f33"/><circle cx="5.5" cy="5.5" r="3.4" fill="#ec5a4c"/><rect x="3.2" y="4.6" width="4.6" height="1.9" fill="#fff"/></svg><span class="dl">Delete</span></div></td>
<td class="r" style="padding-right:10px">24</td>
<td>5</td>
<td class="r" style="padding-right:9px">1</td>
<td>Champion 200<br>Mag Diamond</td>
<td class="n">NULL</td>
<td>champion-200-<br>mag-diamond</td>
<td>&lt;ul&gt;<br>&lt;li&gt;BOTH<br>ELECTROMOTOR<br>CONTROLLED AND<br>ATTEND...</td>
<td>2050.jpg</td>
<td class="r" style="padding-right:10px">95000</td>
<td class="r" style="padding-right:9px">58000</td>
<td class="n">NULL</td>
<td class="n">NULL</td>
<td class="r" style="padding-right:10px">1</td>
<td class="r" style="padding-right:9px">18</td>
<td>43131321654</td>
</tr>
<tr class="g" style="height:46px">
<td class="act"><div class="ac"><svg class="cpi" width="9" height="12" viewBox="0 0 9 12"><rect x="1" y="1" width="1" height="1" fill="#222"/><rect x="0" y="3" width="2" height="8" fill="#5b52d6"/><rect x="0" y="5" width="4" height="2.5" fill="#5b52d6"/><rect x="0" y="10" width="2" height="1.5" fill="#222"/><rect x="6" y="1" width="2" height="1" fill="#5b52d6"/><rect x="5" y="4" width="3" height="4" fill="#222"/><rect x="6" y="5" width="2" height="2" fill="#f5c400"/></svg><span class="cp">Copy</span><svg class="dli" width="11" height="11" viewBox="0 0 11 11" style="top:0.5px"><circle cx="5.5" cy="5.5" r="5.1" fill="#dd3f33"/><circle cx="5.5" cy="5.5" r="3.4" fill="#ec5a4c"/><rect x="3.2" y="4.6" width="4.6" height="1.9" fill="#fff"/></svg><span class="dl">Delete</span></div></td>
<td class="r" style="padding-right:10px">25</td>
<td>2</td>
<td class="r" style="padding-right:9px">1</td>
<td>Rainbow 2C</td>
<td class="n">NULL</td>
<td>rainbow-2c</td>
<td>&lt;ul&gt;<br>&lt;li&gt;It having 110 kg<br>seat weight capacity.<br>...</td>
<td>2613.jpg</td>
<td class="r" style="padding-right:10px">3999</td>
<td class="r" style="padding-right:9px">1500</td>
<td class="n">NULL</td>
<td class="n">NULL</td>
<td class="r" style="padding-right:10px">1</td>
<td class="r" style="padding-right:9px">12</td>
<td>132131685445</td>
</tr>
<tr class="w" style="height:35px">
<td class="act"><div class="ac"><svg class="cpi" width="9" height="12" viewBox="0 0 9 12"><rect x="1" y="1" width="1" height="1" fill="#222"/><rect x="0" y="3" width="2" height="8" fill="#5b52d6"/><rect x="0" y="5" width="4" height="2.5" fill="#5b52d6"/><rect x="0" y="10" width="2" height="1.5" fill="#222"/><rect x="6" y="1" width="2" height="1" fill="#5b52d6"/><rect x="5" y="4" width="3" height="4" fill="#222"/><rect x="6" y="5" width="2" height="2" fill="#f5c400"/></svg><span class="cp">Copy</span><svg class="dli" width="11" height="11" viewBox="0 0 11 11" style="top:0.5px"><circle cx="5.5" cy="5.5" r="5.1" fill="#dd3f33"/><circle cx="5.5" cy="5.5" r="3.4" fill="#ec5a4c"/><rect x="3.2" y="4.6" width="4.6" height="1.9" fill="#fff"/></svg><span class="dl">Delete</span></div></td>
<td class="r" style="padding-right:10px">26</td>
<td>4</td>
<td class="r" style="padding-right:9px">1</td>
<td>VOIS-<br>communication<br>aid</td>
<td class="n">NULL</td>
<td>vois-<br>communication-<br>aid</td>
<td>&lt;p&gt;Product<br>&amp;ldquo;VOIS&amp;rdquo;<br>is a pair of gloves ...</td>
<td>5711.png</td>
<td class="r" style="padding-right:10px">43750</td>
<td class="r" style="padding-right:9px">35500</td>
<td class="n">NULL</td>
<td class="n">NULL</td>
<td class="r" style="padding-right:10px">1</td>
<td class="r" style="padding-right:9px">20</td>
<td>12423436343</td>
</tr>
<tr class="g" style="height:35px">
<td class="act"><div class="ac"><svg class="cpi" width="9" height="12" viewBox="0 0 9 12"><rect x="1" y="1" width="1" height="1" fill="#222"/><rect x="0" y="3" width="2" height="8" fill="#5b52d6"/><rect x="0" y="5" width="4" height="2.5" fill="#5b52d6"/><rect x="0" y="10" width="2" height="1.5" fill="#222"/><rect x="6" y="1" width="2" height="1" fill="#5b52d6"/><rect x="5" y="4" width="3" height="4" fill="#222"/><rect x="6" y="5" width="2" height="2" fill="#f5c400"/></svg><span class="cp">Copy</span><svg class="dli" width="11" height="11" viewBox="0 0 11 11" style="top:0.5px"><circle cx="5.5" cy="5.5" r="5.1" fill="#dd3f33"/><circle cx="5.5" cy="5.5" r="3.4" fill="#ec5a4c"/><rect x="3.2" y="4.6" width="4.6" height="1.9" fill="#fff"/></svg><span class="dl">Delete</span></div></td>
<td class="r" style="padding-right:10px">27</td>
<td>7</td>
<td class="r" style="padding-right:9px">1</td>
<td>Test Chairs</td>
<td class="n">NULL</td>
<td>test-chairs</td>
<td>&lt;p&gt;Loreum ipsum<br>loreum ipsum loreum<br>ipsumLoreum ip...</td>
<td>6100.jpg</td>
<td class="r" style="padding-right:10px">20000</td>
<td class="r" style="padding-right:9px">15000</td>
<td class="n">NULL</td>
<td class="n">NULL</td>
<td class="r" style="padding-right:10px">1</td>
<td class="r" style="padding-right:9px">11</td>
<td>648732648736</td>
</tr>
<tr class="w" style="height:20px">
<td class="act"><div class="ac"><svg class="cpi" width="9" height="12" viewBox="0 0 9 12"><rect x="1" y="1" width="1" height="1" fill="#222"/><rect x="0" y="3" width="2" height="8" fill="#5b52d6"/><rect x="0" y="5" width="4" height="2.5" fill="#5b52d6"/><rect x="0" y="10" width="2" height="1.5" fill="#222"/><rect x="6" y="1" width="2" height="1" fill="#5b52d6"/><rect x="5" y="4" width="3" height="4" fill="#222"/><rect x="6" y="5" width="2" height="2" fill="#f5c400"/></svg><span class="cp">Copy</span><svg class="dli" width="11" height="11" viewBox="0 0 11 11" style="top:0.5px"><circle cx="5.5" cy="5.5" r="5.1" fill="#dd3f33"/><circle cx="5.5" cy="5.5" r="3.4" fill="#ec5a4c"/><rect x="3.2" y="4.6" width="4.6" height="1.9" fill="#fff"/></svg><span class="dl">Delete</span></div></td>
<td class="r" style="padding-right:10px">28</td>
<td>10</td>
<td class="r" style="padding-right:9px">1</td>
<td>Test</td>
<td class="n">NULL</td>
<td></td>
<td>&lt;p&gt;Test&lt;/p&gt;</td>
<td>1097.png</td>
<td class="r" style="padding-right:10px">10000</td>
<td class="r" style="padding-right:9px">500</td>
<td class="n">NULL</td>
<td class="n">NULL</td>
<td class="r" style="padding-right:10px">1</td>
<td class="r" style="padding-right:9px">20</td>
<td>10</td>
</tr>
<tr class="g" style="height:21px">
<td class="act"><div class="ac"><svg class="cpi" width="9" height="12" viewBox="0 0 9 12"><rect x="1" y="1" width="1" height="1" fill="#222"/><rect x="0" y="3" width="2" height="8" fill="#5b52d6"/><rect x="0" y="5" width="4" height="2.5" fill="#5b52d6"/><rect x="0" y="10" width="2" height="1.5" fill="#222"/><rect x="6" y="1" width="2" height="1" fill="#5b52d6"/><rect x="5" y="4" width="3" height="4" fill="#222"/><rect x="6" y="5" width="2" height="2" fill="#f5c400"/></svg><span class="cp">Copy</span><svg class="dli" width="11" height="11" viewBox="0 0 11 11" style="top:0.5px"><circle cx="5.5" cy="5.5" r="5.1" fill="#dd3f33"/><circle cx="5.5" cy="5.5" r="3.4" fill="#ec5a4c"/><rect x="3.2" y="4.6" width="4.6" height="1.9" fill="#fff"/></svg><span class="dl">Delete</span></div></td>
<td class="r" style="padding-right:10px">29</td>
<td>10</td>
<td class="r" style="padding-right:9px">1</td>
<td>Test132</td>
<td class="n">NULL</td>
<td></td>
<td>&lt;p&gt;Test data&lt;/p&gt;</td>
<td>5000.png</td>
<td class="r" style="padding-right:10px">500</td>
<td class="r" style="padding-right:9px">400</td>
<td class="n">NULL</td>
<td class="n">NULL</td>
<td class="r" style="padding-right:10px">1</td>
<td class="r" style="padding-right:9px">20</td>
<td>555</td>
</tr>
<tr class="w" style="height:21px">
<td class="act"><div class="ac"><svg class="cpi" width="9" height="12" viewBox="0 0 9 12"><rect x="1" y="1" width="1" height="1" fill="#222"/><rect x="0" y="3" width="2" height="8" fill="#5b52d6"/><rect x="0" y="5" width="4" height="2.5" fill="#5b52d6"/><rect x="0" y="10" width="2" height="1.5" fill="#222"/><rect x="6" y="1" width="2" height="1" fill="#5b52d6"/><rect x="5" y="4" width="3" height="4" fill="#222"/><rect x="6" y="5" width="2" height="2" fill="#f5c400"/></svg><span class="cp">Copy</span><svg class="dli" width="11" height="11" viewBox="0 0 11 11" style="top:0.5px"><circle cx="5.5" cy="5.5" r="5.1" fill="#dd3f33"/><circle cx="5.5" cy="5.5" r="3.4" fill="#ec5a4c"/><rect x="3.2" y="4.6" width="4.6" height="1.9" fill="#fff"/></svg><span class="dl">Delete</span></div></td>
<td class="r" style="padding-right:10px">30</td>
<td>1</td>
<td class="r" style="padding-right:9px">1</td>
<td>aaa</td>
<td class="n">NULL</td>
<td></td>
<td>&lt;p&gt;fjhhk&lt;/p&gt;</td>
<td>5502.jpg</td>
<td class="r" style="padding-right:10px">423</td>
<td class="r" style="padding-right:9px">676</td>
<td class="n">NULL</td>
<td class="n">NULL</td>
<td class="r" style="padding-right:10px">1</td>
<td class="r" style="padding-right:9px">43</td>
<td>565776776</td>
</tr>
</table></div>
<!-- check all row -->
<div class="ftx" style="left:-2px;top:640px;color:#235a81">heck all</div>
<div class="ftx" style="left:55px;top:640px;font-style:italic">With selected:</div>
<svg class="a" style="left:128px;top:640px" width="11" height="11" viewBox="0 0 11 11"><path d="M1 10l1-3 6-6 2 2-6 6z" fill="#f0b030" stroke="#b07010" stroke-width="0.6"/><path d="M1 10l1-3 2 2z" fill="#555"/></svg>
<div class="ftx" style="left:143px;top:640px;color:#235a81">Edit</div>
<svg class="a" style="left:174px;top:639px" width="13" height="12" viewBox="0 0 13 12"><path d="M1 1v10" stroke="#222" stroke-width="1"/><path d="M0 6h5M2.5 3.5v5" stroke="#6a5acd" stroke-width="1.8"/><rect x="7.5" y="4" width="3.5" height="3.5" fill="#f4c20d" stroke="#222" stroke-width="0.8"/></svg>
<div class="ftx" style="left:189px;top:640px;color:#235a81">Copy</div>
<svg class="a" style="left:227px;top:641px" width="11" height="11" viewBox="0 0 11 11"><circle cx="5.5" cy="5.5" r="5.1" fill="#dd3f33"/><circle cx="5.5" cy="5.5" r="3.4" fill="#ec5a4c"/><rect x="3.2" y="4.6" width="4.6" height="1.9" fill="#fff"/></svg>
<div class="ftx" style="left:242px;top:640px;color:#235a81">Delete</div>
<svg class="a" style="left:286px;top:640px" width="12" height="11" viewBox="0 0 12 11"><rect x="0.5" y="0.5" width="11" height="10" fill="#eef2e8" stroke="#7b8fa0" stroke-width="0.8"/><path d="M2 6h9" stroke="#3b9a3b" stroke-width="1.6"/></svg>
<div class="ftx" style="left:300px;top:640px;color:#235a81">Export</div>
<!-- filter bar bottom -->
<div class="ftx" style="left:-1px;top:682px;color:#235a81">all</div>
<div class="a" style="left:19px;top:680px;width:1px;height:13px;background:#a8a49c"></div>
<div class="ftx" style="left:29px;top:682px">Number of rows:</div>
<div class="sel" style="left:108px;top:679px;width:44px;height:17px"><span style="left:6px">25</span><svg class="chev" style="left:28px;top:5px" width="10" height="7" viewBox="0 0 10 7"><path d="M0.8 1l4.2 4.2 4.2-4.2" stroke="#111" stroke-width="1.7" fill="none"/></svg></div>
<div class="ftx" style="left:177px;top:682px">Filter rows:</div>
<div class="sel" style="left:230px;top:679px;width:129px;height:17px"><span style="left:4px;color:#777">Search this table</span></div>
<div class="ftx" style="left:363px;top:682px">Sort by key:</div>
<div class="sel" style="left:426px;top:679px;width:108px;height:17px"><span style="left:6px">None</span><svg class="chev" style="left:90px;top:5px" width="10" height="7" viewBox="0 0 10 7"><path d="M0.8 1l4.2 4.2 4.2-4.2" stroke="#111" stroke-width="1.7" fill="none"/></svg></div>
<!-- console -->
<div class="a" style="left:2px;top:698px;width:60px;height:13px;background:#d8d8d8;border:1px solid #b0b0b0;border-bottom:none;border-left:none;border-radius:0 3px 0 0"></div>
<svg class="a" style="left:9px;top:701px" width="9" height="8" viewBox="0 0 9 8"><rect width="9" height="8" fill="#1e1e1e"/><rect x="0" y="0" width="9" height="1.2" fill="#f4f4f4"/></svg>
<div class="ftx" style="left:23px;top:700px;font-size:10px;color:#333">Console</div>
<!-- scrollbars -->
<div class="a" style="left:1349px;top:109px;width:17px;height:602px;background:#f1f1f1"></div>
<svg class="a" style="left:1353px;top:114px" width="9" height="6" viewBox="0 0 9 6"><path d="M0 5.5L4.5 0.5 9 5.5z" fill="#505050"/></svg>
<svg class="a" style="left:1353px;top:699px" width="9" height="6" viewBox="0 0 9 6"><path d="M0 0.5L4.5 5.5 9 0.5z" fill="#505050"/></svg>
<div class="a" style="left:1351px;top:174px;width:13px;height:390px;background:#c1c1c1"></div>
<div class="a" style="left:0;top:711px;width:1349px;height:17px;background:#f1f1f1"></div>
<svg class="a" style="left:5px;top:715px" width="6" height="9" viewBox="0 0 6 9"><path d="M5.5 0L0.5 4.5 5.5 9z" fill="#505050"/></svg>
<svg class="a" style="left:1338px;top:715px" width="6" height="9" viewBox="0 0 6 9"><path d="M0.5 0L5.5 4.5 0.5 9z" fill="#505050"/></svg>
<div class="a" style="left:54px;top:713px;width:707px;height:13px;background:#c1c1c1"></div>
<div class="a" style="left:1349px;top:711px;width:17px;height:17px;background:#dcdcdc"></div>
<!-- find bar -->
<div class="a" style="left:931px;top:72px;width:327px;height:48px;background:#fff;border-radius:5px;box-shadow:0 1px 2px rgba(0,0,0,.3),0 0 1px rgba(0,0,0,.3)"></div>
<div class="a" style="left:947px;top:88px;font-size:11.7px;line-height:15px;color:#202020;white-space:nowrap">fx_shipping_address</div>
<div class="a" style="left:1111px;top:88px;font-size:12px;line-height:15px;color:#5f5f5f;white-space:nowrap">0/0</div>
<div class="a" style="left:1145px;top:80px;width:1px;height:31px;background:#dadada"></div>
<svg class="a" style="left:1163px;top:91px" width="12" height="8" viewBox="0 0 12 8"><path d="M1 7L6 2l5 5" stroke="#9a9a9a" stroke-width="1.6" fill="none"/></svg>
<svg class="a" style="left:1196px;top:92px" width="12" height="8" viewBox="0 0 12 8"><path d="M1 1l5 5 5-5" stroke="#9a9a9a" stroke-width="1.6" fill="none"/></svg>
<svg class="a" style="left:1228px;top:90px" width="12" height="12" viewBox="0 0 12 12"><path d="M1.2 1.2l9.6 9.6M10.8 1.2l-9.6 9.6" stroke="#333" stroke-width="2"/></svg>
<!-- taskbar -->
<div class="a" style="left:0;top:728px;width:1366px;height:40px;background:#d1e0eb"></div>
<svg class="a" style="left:15px;top:740px" width="17" height="17" viewBox="0 0 17 17"><path d="M0 2.3l7-1v7H0zM8 1.2L17 0v8H8zM0 9h7v7l-7-1zM8 9h9v8l-9-1.2z" fill="#111"/></svg>
<div class="a" style="left:48px;top:728px;width:288px;height:40px;background:#fff;border:1px solid #c4c4c4;border-bottom:none"></div>
<svg class="a" style="left:59px;top:740px" width="17" height="17" viewBox="0 0 17 17"><circle cx="10.5" cy="6.5" r="5.3" stroke="#222" stroke-width="1.3" fill="none"/><path d="M6.7 10.3L1 16" stroke="#222" stroke-width="1.4"/></svg>
<div class="a" style="left:88px;top:739px;font-size:14.6px;line-height:19px;color:#222;white-space:nowrap">Type here to search</div>
<svg class="a" style="left:255px;top:729px" width="80" height="39" viewBox="0 -1 80 39">
<path d="M30 20 L48 40 M35 25 L38 10 M33 24 L44 22 M29 29 L24 37 M33 33 L40 30" stroke="#7a9a3a" stroke-width="1.4" fill="none"/>
<ellipse cx="20" cy="9" rx="10" ry="7" fill="#8a80e8"/><ellipse cx="20" cy="9" rx="6" ry="4" fill="#a49ef0"/>
<ellipse cx="33" cy="13" rx="7.5" ry="6" fill="#8d84ea"/>
<ellipse cx="22" cy="24" rx="9" ry="8" fill="#8a80e8"/><ellipse cx="22" cy="24" rx="5" ry="4.5" fill="#a29cf0"/>
<circle cx="20" cy="9" r="2.2" fill="#f0a020"/><circle cx="33" cy="13" r="2" fill="#f0a020"/><circle cx="22" cy="24" r="2.4" fill="#f0a020"/>
<circle cx="40" cy="24" r="3" fill="#3e9a3a"/><circle cx="24" cy="34" r="3.3" fill="#3e9a3a"/>
<path d="M50 9 L55 5 L66 5 L64 13 L58 16 Z" fill="#3d8ef0"/><path d="M53 9l6-3 5 1-2 5z" fill="#8cc4ff"/>
<path d="M50 23 Q52 18 60 18 Q70 18 71 26 Q70 33 60 34 Q50 33 50 23z" fill="#3d82ee"/><ellipse cx="60" cy="24" rx="6" ry="4" fill="#7fb6ff"/>
</svg>
<svg class="a" style="left:351px;top:740px" width="18" height="17" viewBox="0 0 18 17"><path d="M1 1h13M1 16h13M2 4h11v9H2z" stroke="#222" stroke-width="1.4" fill="none"/><rect x="15.5" y="3" width="2" height="2" fill="#222"/><rect x="15.5" y="7" width="2" height="3" fill="#222"/></svg>
<svg class="a" style="left:399px;top:736px" width="24" height="24" viewBox="0 0 24 24"><defs><linearGradient id="eg" x1="0" y1="0" x2="1" y2="0.4"><stop offset="0" stop-color="#2d9be6"/><stop offset="0.45" stop-color="#2cbfd0"/><stop offset="1" stop-color="#5cd45a"/></linearGradient></defs>
<path d="M12 0A12 12 0 0 1 24 11.5c0 2.8-2.2 4.5-5 4.5-2.2 0-3.6-.8-3.6-1.6 0-.6.9-1 1.2-2.4C17 8 14 5.5 10.5 5.5 5 5.5 1.2 9.5 0 13 0 5.5 5.5 0 12 0z" fill="url(#eg)"/>
<path d="M0 13C1.2 9.5 5 5.5 10.5 5.5c3.5 0 6.5 2.5 6.1 6.5-.3 1.4-1.2 1.8-1.2 2.4 0 .8 1.4 1.6 3.6 1.6 1.4 0 2.6-.4 3.6-1.1C21 20 17 24 12 24 5.5 24 0 19 0 13z" fill="#0e6fc9"/>
<path d="M9 8.5C6 10 5.5 16 9.5 19.5c2.5 2 6.5 2.6 9.5 1-3.5.8-7.5-.6-9-3.6-1.6-3.1-.8-6.6 1.6-7.8-.8-.6-1.8-.8-2.6-.6z" fill="#1a4fa0"/>
<path d="M11.5 11.5c1.5-1.2 4.5-.8 5 1.2-.2.8-1 1.2-1 1.8 0 1 1.6 1.8 3.8 1.8-2.5 1.5-6.5 1-7.8-1.2-.6-1-.6-2.6 0-3.6z" fill="#d1e0eb"/></svg>
<svg class="a" style="left:448px;top:736px" width="24" height="22" viewBox="0 0 24 22"><path d="M0 7L12 0 24 7z" fill="#0f5fb5"/><path d="M0 7h24v15H0z" fill="#25a0ea"/><path d="M2 7h20l-10 7z" fill="#f4f4f4"/><path d="M0 22l12-8 12 8z" fill="#1b88d8"/><path d="M24 7v15l-12-8z" fill="#3ab4f0"/></svg>
<svg class="a" style="left:497px;top:736px" width="24" height="24" viewBox="0 0 24 24"><path d="M17.5 0.5L24 3.5v17l-6.5 3-11-10-4.5 3.5L0 16V8l2 -1 4.5 3.5z" fill="#1f8ad2"/><path d="M17.5 6.5L10 12l7.5 5.5z" fill="#d1e0eb"/><path d="M17.5 0.5L24 3.5v17l-6.5 3z" fill="#0e6ab8"/></svg>
<svg class="a" style="left:546px;top:738px" width="24" height="20" viewBox="0 0 24 20"><path d="M0 1h8l2 2h0v3H0z" fill="#f0a020"/><path d="M0 4h24v14H0z" fill="#fcd26a"/><path d="M5 12h14v8h-3v-4H8v4H5z" fill="#3d8ee0"/></svg>
<div class="a" style="left:538px;top:765px;width:39px;height:3px;background:#0a6ccc"></div>
<div class="a" style="left:583px;top:728px;width:48px;height:40px;background:#e8eff6"></div>
<svg class="a" style="left:595px;top:736px" width="24" height="24" viewBox="0 0 24 24"><path d="M12 12L21.96 6.25A11.5 11.5 0 0 0 2.04 6.25Z" fill="#db4437"/><path d="M12 12L12 23.5A11.5 11.5 0 0 0 21.96 6.25Z" fill="#fcc934"/><path d="M12 12L2.04 6.25A11.5 11.5 0 0 0 12 23.5Z" fill="#1ea362"/><path d="M12 6.5H21.96L17 12z" fill="#db4437"/><path d="M7 14.5L12 23.5 9 13z" fill="#1ea362"/><circle cx="12" cy="12" r="5.4" fill="#fff"/><circle cx="12" cy="12" r="4.3" fill="#4a87e8"/></svg>
<div class="a" style="left:583px;top:765px;width:48px;height:3px;background:#0a6ccc"></div>
<svg class="a" style="left:644px;top:736px" width="24" height="24" viewBox="0 0 24 24"><rect width="24" height="24" rx="2.5" fill="#3b3b3b"/><path d="M17.5 5.5L7 9v4.5l6 2-6 2V21l10.5-3.5v-4.5l-6-2 6-2z" fill="#f79a1b"/></svg>
<div class="a" style="left:636px;top:765px;width:39px;height:3px;background:#0a6ccc"></div>
<svg class="a" style="left:693px;top:736px" width="24" height="24" viewBox="0 0 24 24"><rect width="24" height="24" rx="3" fill="#f0762a"/><rect x="0.5" y="0.5" width="23" height="23" rx="3" fill="none" stroke="#d45f1a"/><path d="M7 6.5Q5 6.5 5 8.5Q5 10.5 7.5 11V13Q5 13.5 5 15.5Q5 17.5 7 17.5Q9 17.5 9.5 15.5H14.5Q15 17.5 17 17.5Q19 17.5 19 15.5Q19 13.5 16.5 13V11Q19 10.5 19 8.5Q19 6.5 17 6.5Q15 6.5 14.5 8.5H9.5Q9 6.5 7 6.5z" fill="none" stroke="#fff" stroke-width="2.2"/></svg>
<div class="a" style="left:687px;top:765px;width:37px;height:3px;background:#0a6ccc"></div>
<!-- tray -->
<svg class="a" style="left:924px;top:735px" width="26" height="26" viewBox="0 0 26 26"><circle cx="11" cy="13" r="9.8" fill="#f39a1c"/><circle cx="11" cy="13" r="7" fill="#f6a83a"/><path d="M1.5 10.5a3.5 3.5 0 0 1 3-4 4 4 0 0 1 7.5 0.5 3 3 0 0 1 1.5 3.5z" fill="#d4e6f8"/><path d="M1.5 10.5h12" stroke="#a9c8e8" stroke-width="0.8"/><path d="M10 23a3.5 3.5 0 0 1 2.5-4.5 4.5 4.5 0 0 1 8.5 0.5 3.2 3.2 0 0 1 2.5 4z" fill="#d4e6f8"/><path d="M10 23h13.5" stroke="#a9c8e8" stroke-width="0.8"/><circle cx="18.5" cy="6.5" r="6" fill="#c42b22"/><text x="18.5" y="10" font-size="9" fill="#fff" text-anchor="middle" font-family="Liberation Sans">1</text></svg>
<div class="tb" style="left:956px">30°C</div>
<div class="tb" style="left:994px">Partly sunny</div>
<svg class="a" style="left:1093px;top:743px" width="13" height="9" viewBox="0 0 13 9"><path d="M1 8l5.5-6.5L12 8" stroke="#111" stroke-width="1.3" fill="none"/></svg>
<svg class="a" style="left:1118px;top:740px" width="13" height="17" viewBox="0 0 13 17"><rect x="1" y="4" width="8" height="8" rx="1.5" stroke="#111" stroke-width="1.1" fill="none"/><path d="M9 7l3-2v6l-3-2" stroke="#111" stroke-width="1" fill="none"/><path d="M2 1.5h6M2 15h6" stroke="#111" stroke-width="1"/></svg>
<svg class="a" style="left:1139px;top:741px" width="18" height="13" viewBox="0 0 18 13"><path d="M4 1v3M2 3h4M4 4v3" stroke="#111" stroke-width="1.2"/><rect x="5" y="4" width="11" height="7" stroke="#111" stroke-width="1.2" fill="none"/><rect x="7" y="6" width="7" height="3" fill="#111"/><rect x="16" y="6" width="1.5" height="3" fill="#111"/></svg>
<svg class="a" style="left:1166px;top:740px" width="14" height="14" viewBox="0 0 14 14"><path d="M1 13a12 12 0 0 1 12-12M4 13a9 9 0 0 1 9-9M7 13a6 6 0 0 1 6-6M10 13a3 3 0 0 1 3-3" stroke="#111" stroke-width="1.1" fill="none"/></svg>
<svg class="a" style="left:1187px;top:740px" width="17" height="15" viewBox="0 0 17 15"><path d="M1 5h3l4-4v13l-4-4H1z" stroke="#111" stroke-width="1.1" fill="none"/><path d="M10.5 4.5a4 4 0 0 1 0 6M13 2.5a7 7 0 0 1 0 10" stroke="#111" stroke-width="1" fill="none"/></svg>
<div class="tb" style="left:1213px;font-size:12px">ENG</div>
<div class="a" style="left:1254px;top:731px;font-size:11.8px;line-height:15px;color:#111;white-space:nowrap">07:14 PM</div>
<div class="a" style="left:1249px;top:749px;font-size:11.8px;line-height:15px;color:#111;white-space:nowrap">01-09-2023</div>
<svg class="a" style="left:1324px;top:739px" width="24" height="24" viewBox="0 0 24 24"><path d="M1 1h16v12H7l-4 4v-4H1z" fill="#111"/><path d="M4 4.5h10M4 7h10M4 9.5h8" stroke="#d1e0eb" stroke-width="1"/><circle cx="16" cy="16" r="7" fill="#d1e0eb" stroke="#666" stroke-width="1"/><text x="16" y="20" font-size="10" fill="#222" text-anchor="middle" font-family="Liberation Sans">1</text></svg>
</body></html>
